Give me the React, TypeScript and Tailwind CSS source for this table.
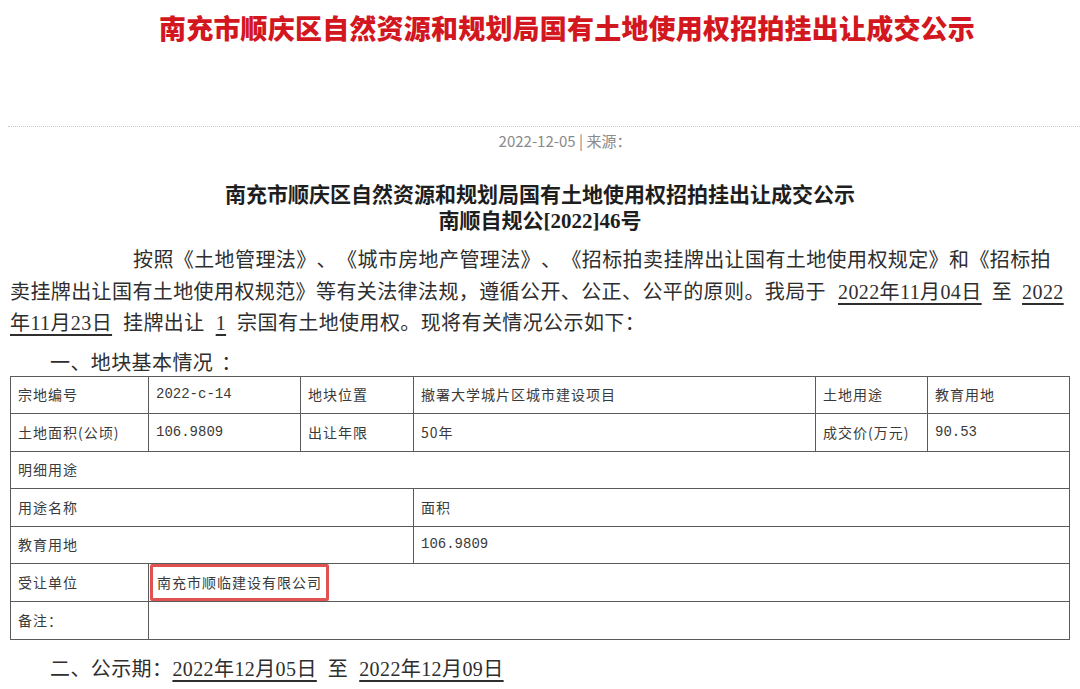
const serif = "font-['Liberation_Serif','Noto_Sans_CJK_SC',serif]";
const sans = "font-['Noto_Sans_CJK_SC','Liberation_Sans',sans-serif]";

function U({ children }: { children: React.ReactNode }) {
  return (
    <span className="underline decoration-[1.5px] underline-offset-[4px]">{children}</span>
  );
}

function Cell({
  children,
  colSpan,
  mono = false,
}: {
  children?: React.ReactNode;
  colSpan?: number;
  mono?: boolean;
}) {
  return (
    <td
      colSpan={colSpan}
      className={`border border-[#5a5a5a] px-[7px] py-0 align-middle text-[14px] text-[#3a3a3a] whitespace-nowrap ${
        mono
          ? "font-['Liberation_Mono','Noto_Sans_CJK_SC',monospace] tracking-[0px] text-[13px]"
          : `${sans} tracking-[1px]`
      }`}
    >
      {children}
    </td>
  );
}

export default function App() {
  return (
    <div className="w-[1080px] h-[689px] overflow-hidden bg-white [text-spacing-trim:space-all]">
      {/* red page title */}
      <div className="pl-[54px] pt-[8px] h-[56px] text-center">
        <h1
          className={`${sans} text-[27px] leading-[40px] font-black text-[#d3171f] tracking-[0.2px]`}
        >
          南充市顺庆区自然资源和规划局国有土地使用权招拍挂出让成交公示
        </h1>
      </div>

      <div className="mt-[70px] ml-[8px] border-t border-dotted border-[#c8c8c8]" />

      <div
        className={`${sans} pl-[50px] h-[28px] leading-[28px] text-center text-[15px] text-[#8a8a8a]`}
      >
        2022-12-05 | 来源：
      </div>

      {/* document heading */}
      <div
        className={`${serif} mt-[27px] text-center text-[21px] leading-[26px] font-bold text-[#1e1e1e]`}
      >
        <div>南充市顺庆区自然资源和规划局国有土地使用权招拍挂出让成交公示</div>
        <div>南顺自规公[2022]46号</div>
      </div>

      {/* body paragraph */}
      <div
        className={`${serif} mt-[11px] text-[20px] leading-[31.5px] text-[#2e2e2e] tracking-[0.4px] whitespace-nowrap`}
      >
        <div className="ml-[133px]">
          按照《土地管理法》、《城市房地产管理法》、《招标拍卖挂牌出让国有土地使用权规定》和《招标拍
        </div>
        <div className="ml-[10px]">
          卖挂牌出让国有土地使用权规范》等有关法律法规，遵循公开、公正、公平的原则。我局于
          <span className="ml-[12px]">
            <U>2022年11月04日</U>
          </span>
          <span className="px-[10px]">至</span>
          <U>2022</U>
        </div>
        <div className="ml-[10px]">
          <U>年11月23日</U>
          <span className="px-[11px]">挂牌出让</span>
          <U>1</U>
          <span className="ml-[11px]">宗国有土地使用权。现将有关情况公示如下：</span>
        </div>
      </div>

      <div
        className={`${serif} mt-[10px] ml-[50px] text-[20px] leading-[26px] text-[#2e2e2e] tracking-[0.4px]`}
      >
        一、地块基本情况<span className="ml-[8px]">：</span>
      </div>

      {/* parcel table */}
      <table className="ml-[10px] w-[1059px] table-fixed border-collapse">
        <colgroup>
          <col className="w-[138px]" />
          <col className="w-[152px]" />
          <col className="w-[113px]" />
          <col className="w-[402px]" />
          <col className="w-[112px]" />
          <col className="w-[142px]" />
        </colgroup>
        <tbody>
          <tr className="h-[37.5px]">
            <Cell>宗地编号</Cell>
            <Cell mono>2022-c-14</Cell>
            <Cell>地块位置</Cell>
            <Cell>撤署大学城片区城市建设项目</Cell>
            <Cell>土地用途</Cell>
            <Cell>教育用地</Cell>
          </tr>
          <tr className="h-[37.5px]">
            <Cell>土地面积(公顷)</Cell>
            <Cell mono>106.9809</Cell>
            <Cell>出让年限</Cell>
            <Cell>50年</Cell>
            <Cell>成交价(万元)</Cell>
            <Cell mono>90.53</Cell>
          </tr>
          <tr className="h-[37.5px]">
            <Cell colSpan={6}>明细用途</Cell>
          </tr>
          <tr className="h-[37.5px]">
            <Cell colSpan={3}>用途名称</Cell>
            <Cell colSpan={3}>面积</Cell>
          </tr>
          <tr className="h-[37.5px]">
            <Cell colSpan={3}>教育用地</Cell>
            <Cell colSpan={3} mono>106.9809</Cell>
          </tr>
          <tr className="h-[37.5px]">
            <Cell>受让单位</Cell>
            <td
              colSpan={5}
              className="border border-[#5a5a5a] p-0 align-middle"
            >
              <span
                className={`${sans} ml-[1px] inline-flex h-[37px] items-center border-[3px] border-[#e05252] px-[4px] text-[14px] tracking-[1px] text-[#3a3a3a] rounded-[2px]`}
              >
                南充市顺临建设有限公司
              </span>
            </td>
          </tr>
          <tr className="h-[37.5px]">
            <Cell>备注：</Cell>
            <Cell colSpan={5} />
          </tr>
        </tbody>
      </table>

      <div
        className={`${serif} mt-[15px] ml-[50px] text-[20px] leading-[28px] text-[#2e2e2e] tracking-[0.4px] whitespace-nowrap`}
      >
        二、公示期：
        <U>2022年12月05日</U>
        <span className="px-[11px]">至</span>
        <U>2022年12月09日</U>
      </div>
    </div>
  );
}
